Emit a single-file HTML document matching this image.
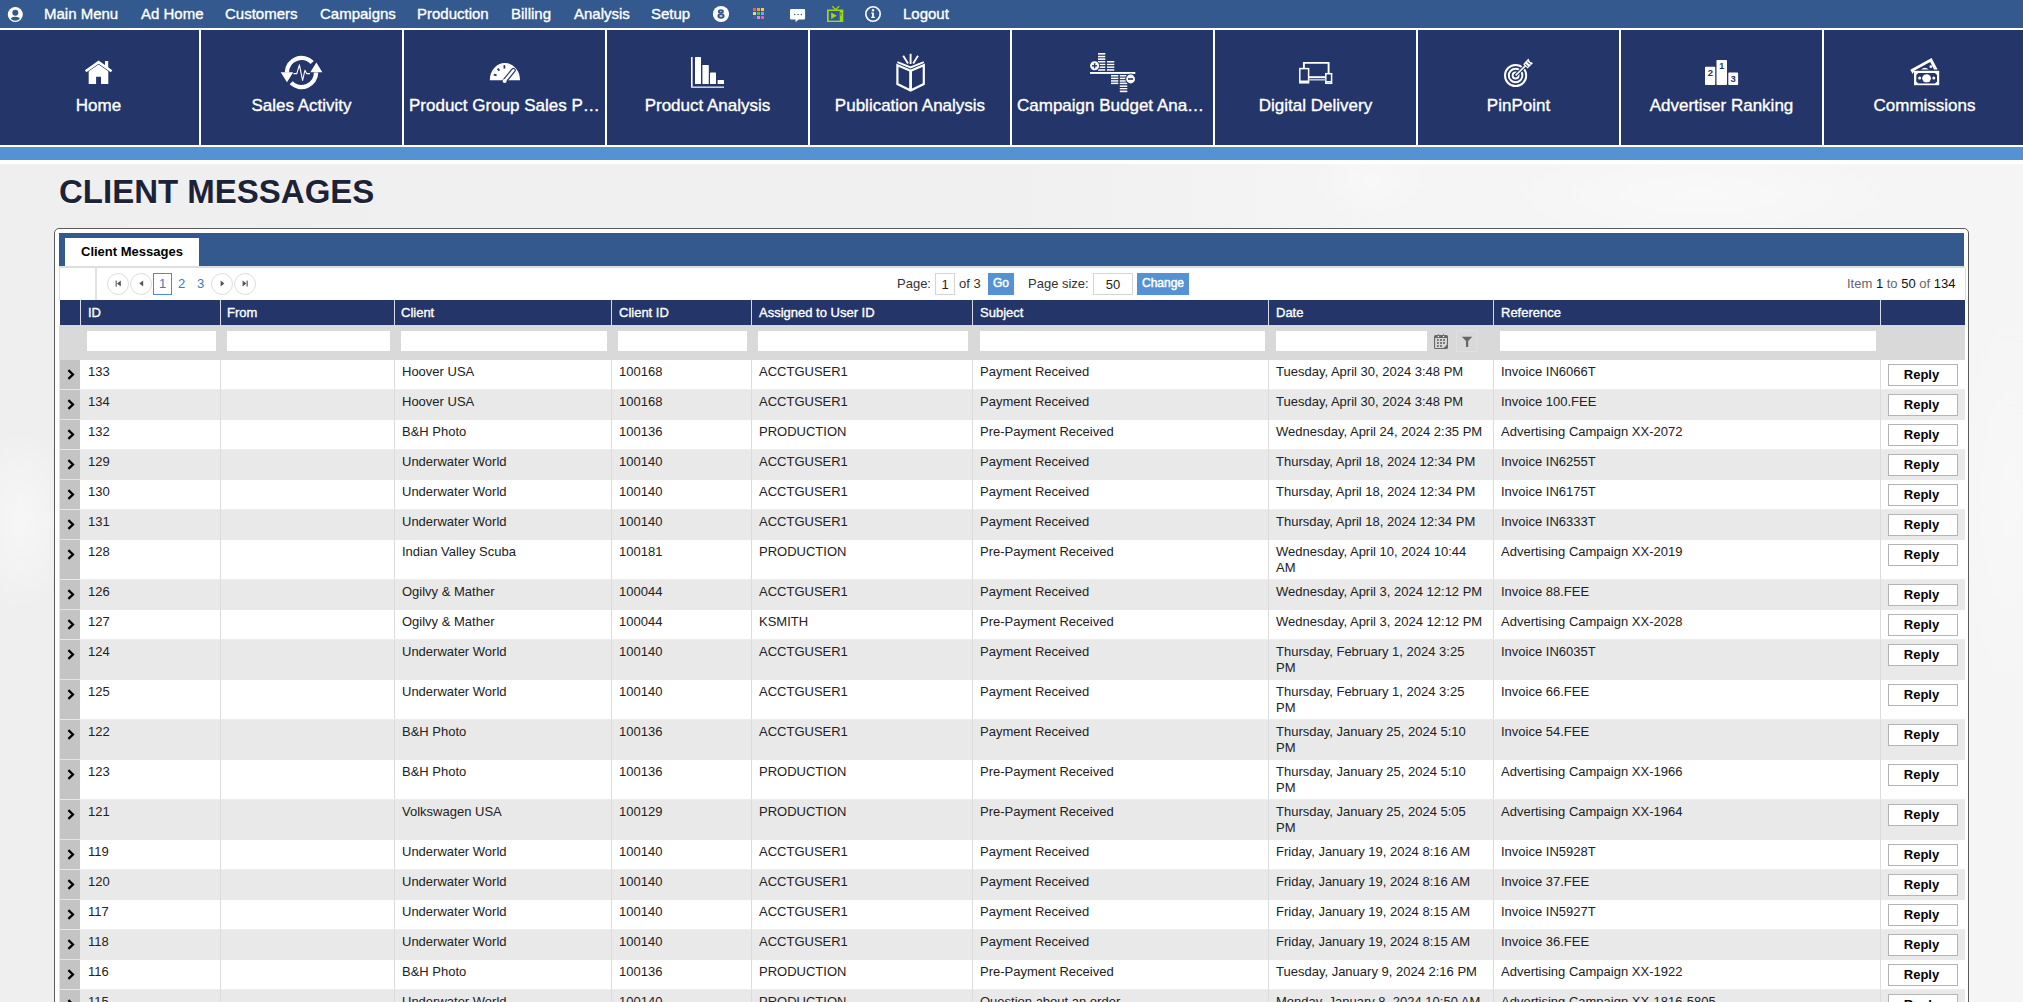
<!DOCTYPE html>
<html><head><meta charset="utf-8"><style>
html,body{margin:0;padding:0}
body{width:2023px;height:1002px;overflow:hidden;position:relative;background:radial-gradient(ellipse 200px 50px at 1700px 195px,#f9f9f9,rgba(249,249,249,0)),radial-gradient(ellipse 60px 40px at 1370px 180px,#f8f8f8,rgba(248,248,248,0)),radial-gradient(ellipse 60px 200px at 2010px 500px,#f8f8f8,rgba(248,248,248,0)),radial-gradient(ellipse 50px 90px at 20px 520px,#f7f7f7,rgba(247,247,247,0)),linear-gradient(90deg,#efefef 0px,#f0f0f0 1000px,#f5f5f5 1400px,#f5f5f5 2023px);font-family:"Liberation Sans",sans-serif;color:#222}
.abs{position:absolute}
#topbar{position:absolute;left:0;top:0;width:2023px;height:28px;background:#33598e}
#topline{position:absolute;left:0;top:28px;width:2023px;height:2px;background:#fff}
.nav{position:absolute;top:-0.5px;height:28px;line-height:28px;font-size:15px;color:#fff;white-space:nowrap}
#tilesbg{position:absolute;left:0;top:30px;width:2023px;height:117px;background:#fff}
.tile{position:absolute;top:30px;height:115px;width:200.875px;background:#243569;color:#fff;overflow:hidden}
.tile .lbl.l{text-align:left}
.tile .lbl{position:absolute;left:5px;right:5px;top:66px;height:20px;line-height:20px;font-size:17px;text-align:center;white-space:nowrap;overflow:hidden;text-overflow:ellipsis}
.tile svg{position:absolute}
#bluebar{position:absolute;left:0;top:147px;width:2023px;height:13px;background:#5592d3}
#whitebar{position:absolute;left:0;top:160px;width:2023px;height:4px;background:#fff}
#h1{position:absolute;left:59px;top:172px;font-size:33px;font-weight:bold;color:#1c2338;line-height:40px;white-space:nowrap;text-shadow:0 1px 1px #fff}
#panel{position:absolute;left:54px;top:228px;width:1913px;height:800px;border:1px solid #5a5a5a;border-radius:5px;background:#fff}
#tabbar{position:absolute;left:59px;top:233px;width:1905px;height:33px;background:#33598e}
#tab{position:absolute;left:65px;top:238px;width:134px;height:28px;background:#fff;font-size:13px;font-weight:bold;color:#000;line-height:28px}
#tabline{position:absolute;left:59px;top:266px;width:1906px;height:2px;background:#dedede}
#pager{position:absolute;left:59px;top:268px;width:1905px;height:32px;background:#fff;border-left:1px solid #ddd;border-right:1px solid #ddd}
.pbtn{position:absolute;top:273px;width:20px;height:20px;border:1px solid #ddd;border-radius:50%;background:#fff}
.pnum{position:absolute;top:273px;height:22px;line-height:22px;font-size:13px;color:#3a7cc4;text-align:center}
.ptxt{position:absolute;top:273px;height:22px;line-height:22px;font-size:13px;color:#333;white-space:nowrap}
.pinp{position:absolute;top:273px;height:20px;border:1px solid #d5d5d5;background:#fff;font-size:13px;line-height:21px;text-align:center;color:#222}
.pgo{position:absolute;top:273px;height:22px;background:#5592d3;color:#fff;font-size:12px;font-weight:normal;-webkit-text-stroke:0.45px #fff;line-height:20px;text-align:center}
#thead{position:absolute;left:60px;top:300px;width:1905px;height:25px;background:#243569}
.th{position:absolute;top:0;height:25px;line-height:25px;font-size:13px;color:#fff;white-space:nowrap}
.thl{position:absolute;top:0;width:1px;height:25px;background:#d8dce6}
#filter{position:absolute;left:59px;top:325px;width:1906px;height:35px;background:#d9d9d9}
.finp{position:absolute;top:6px;height:20px;background:#fff}
.row{position:absolute;left:60px;width:1905px;overflow:hidden}
#lborder{position:absolute;left:59px;top:360px;width:1px;height:642px;background:#e6e6e6}
.exp{position:absolute;left:0;top:0;width:20px;background:#c4c4c4}
.exp svg{position:absolute;left:6.6px;top:9px}
.exp{border-bottom:1px solid #e4e4e4;box-sizing:border-box}
.c{position:absolute;top:4px;font-size:13px;line-height:16px;color:#222;white-space:nowrap}
.vl{position:absolute;top:0;width:1px;background:#dcdcdc}
.reply{position:absolute;width:68px;height:20px;text-indent:-3px;border:1px solid #b4b4b4;background:#fff;font-size:13px;font-weight:bold;color:#000;text-align:center;line-height:20px}
.nav,.tile .lbl,.th{-webkit-text-stroke:0.35px #fff}

</style></head><body>
<div id="topbar"></div>
<div id="topline"></div>
<!-- user icon -->
<svg class="abs" style="left:0;top:0" width="30" height="28" viewBox="0 0 30 28">
<defs><clipPath id="uc"><circle cx="15.3" cy="14.5" r="6.2"/></clipPath></defs>
<circle cx="15.3" cy="14.5" r="7.5" fill="#fff"/>
<g clip-path="url(#uc)"><ellipse cx="15.3" cy="19.4" rx="4.6" ry="2.6" fill="#33598e"/></g>
<circle cx="15.3" cy="12.8" r="3" fill="#33598e"/>
</svg>
<div class="nav" style="left:44px">Main Menu</div>
<div class="nav" style="left:141px">Ad Home</div>
<div class="nav" style="left:225px">Customers</div>
<div class="nav" style="left:320px">Campaigns</div>
<div class="nav" style="left:417px">Production</div>
<div class="nav" style="left:511px">Billing</div>
<div class="nav" style="left:574px">Analysis</div>
<div class="nav" style="left:651px">Setup</div>
<div class="nav" style="left:903px">Logout</div>
<!-- 8 badge -->
<svg class="abs" style="left:710px;top:4px" width="22" height="22" viewBox="0 0 22 22">
<circle cx="11" cy="10" r="8.1" fill="#fff"/>
<ellipse cx="10.9" cy="7.6" rx="2.1" ry="1.35" fill="none" stroke="#33598e" stroke-width="1.8"/><ellipse cx="11" cy="12" rx="2.6" ry="1.75" fill="none" stroke="#33598e" stroke-width="2"/>
</svg>
<!-- grid -->
<svg class="abs" style="left:752px;top:7px" width="14" height="14" viewBox="0 0 14 14">
<rect x="1" y="1" width="3" height="3" fill="#e8604f"/><rect x="5" y="1" width="3" height="3" fill="#f0a23f"/><rect x="9" y="1" width="3" height="3" fill="#f0d040"/>
<rect x="1" y="5" width="3" height="3" fill="#cbe89a"/><rect x="5" y="5" width="3" height="3" fill="#5fbf45"/><rect x="9" y="5" width="3" height="3" fill="#6ea8ef"/>
<rect x="1" y="9" width="3" height="3" fill="#535b93"/><rect x="5" y="9" width="3" height="3" fill="#d488e0"/><rect x="9" y="9" width="3" height="3" fill="#ee6293"/>
</svg>
<!-- chat -->
<svg class="abs" style="left:788px;top:7px" width="20" height="17" viewBox="0 0 20 17">
<path d="M3.3 2 H15.8 Q17.1 2 17.1 3.3 V11.2 Q17.1 12.5 15.8 12.5 H10.5 L7.6 15.2 L7.6 12.5 H3.3 Q2 12.5 2 11.2 V3.3 Q2 2 3.3 2 Z" fill="#fff"/>
<circle cx="6.6" cy="7.5" r="0.75" fill="#33598e"/><circle cx="10" cy="7.5" r="0.75" fill="#33598e"/><circle cx="13.4" cy="7.5" r="0.75" fill="#33598e"/>
</svg>
<!-- tv -->
<svg class="abs" style="left:825px;top:4px" width="20" height="20" viewBox="0 0 20 20">
<path d="M7.3 2.2 L10.8 5.6 L14.2 2.2" fill="none" stroke="#a2d41c" stroke-width="1.3"/>
<rect x="2" y="5.5" width="16.3" height="12.5" fill="#a2d41c"/>
<rect x="3.7" y="7" width="11" height="9.6" fill="#33598e"/>
<path d="M6.2 8.6 L11.9 11.8 L6.2 15 Z" fill="#a2d41c"/>
<rect x="15.3" y="8.7" width="1.3" height="1.3" fill="#33598e"/><rect x="15.3" y="10.7" width="1.3" height="0.8" fill="#33598e"/>
</svg>
<!-- info -->
<svg class="abs" style="left:863px;top:4px" width="20" height="20" viewBox="0 0 20 20">
<circle cx="10" cy="10" r="7.2" fill="none" stroke="#fff" stroke-width="1.6"/>
<circle cx="10" cy="6.3" r="1.2" fill="#fff"/>
<path d="M8.3 8.5 H10.9 V12.8 H11.8 V14.1 H8.2 V12.8 H9.1 V9.8 H8.3 Z" fill="#fff"/>
</svg>

<div id="tilesbg"></div>
<div class="tile" style="left:-2px;width:201px"><div class="lbl">Home</div></div>
<div class="tile" style="left:201px;width:201px"><div class="lbl">Sales Activity</div></div>
<div class="tile" style="left:404px;width:201px"><div class="lbl l">Product Group Sales P…</div></div>
<div class="tile" style="left:607px;width:201px"><div class="lbl">Product Analysis</div></div>
<div class="tile" style="left:810px;width:200px"><div class="lbl">Publication Analysis</div></div>
<div class="tile" style="left:1012px;width:201px"><div class="lbl l">Campaign Budget Ana…</div></div>
<div class="tile" style="left:1215px;width:201px"><div class="lbl">Digital Delivery</div></div>
<div class="tile" style="left:1418px;width:201px"><div class="lbl">PinPoint</div></div>
<div class="tile" style="left:1621px;width:201px"><div class="lbl">Advertiser Ranking</div></div>
<div class="tile" style="left:1824px;width:201px"><div class="lbl">Commissions</div></div>

<!-- tile icons in page coords -->
<svg class="abs" style="left:0;top:30px" width="2023" height="115" viewBox="0 30 2023 115">
<!-- home -->
<g fill="#fff">
<path d="M85.6 71.2 L98.6 62.2 L111.6 71.2" fill="none" stroke="#fff" stroke-width="2.6" stroke-linejoin="miter"/>
<rect x="105" y="61" width="3.2" height="6.5"/>
<path d="M88.7 71.3 L98.6 64.6 L108.3 71.3 V84.1 H101 V76.7 H96.1 V84.1 H88.7 Z"/>
</g>
<!-- sales activity -->
<g fill="#fff" stroke="none">
<path d="M286.9 72.5 A14.6 14.6 0 0 1 312.2 62.6" fill="none" stroke="#fff" stroke-width="4.4"/>
<path d="M316.1 72.5 A14.6 14.6 0 0 1 291.2 82.8" fill="none" stroke="#fff" stroke-width="4.4"/>
<path d="M280.7 72.2 L293.2 72.2 L287 82.3 Z"/>
<path d="M310.3 72.2 L322.3 72.2 L316.4 62.6 Z"/>
<path d="M293.5 73.6 L296.8 73.6 L299.4 64.8 L302.6 80.5 L304.9 70.3 L306.6 73.6 L310 73.6" fill="none" stroke="#fff" stroke-width="1.1" stroke-linejoin="round"/>
</g>
<!-- gauge -->
<g>
<path d="M489.8 80.2 A15.1 17.3 0 0 1 520 80.2 Z" fill="#fff"/>
<path d="M504.6 81 L513.4 70.3" stroke="#243569" stroke-width="4.8" stroke-linecap="round"/>
<path d="M504.6 81 L513.4 70.3" stroke="#fff" stroke-width="2.4" stroke-linecap="round"/>
<circle cx="504.6" cy="80.9" r="2" fill="#fff"/>
<path d="M493.8 74.6 L496.6 75.4" stroke="#243569" stroke-width="1.8"/>
<path d="M497.6 68.6 L499.4 70.6" stroke="#243569" stroke-width="1.8"/>
<path d="M504.4 65.2 L504.4 68.6" stroke="#243569" stroke-width="1.8"/>
</g>
<!-- bar chart -->
<g fill="#fff">
<rect x="691" y="57" width="1.6" height="31"/>
<rect x="691" y="86.4" width="33" height="1.6" fill="#c8ccd8"/>
<rect x="695" y="57" width="6" height="27" rx="0.6"/>
<rect x="702.4" y="65" width="6.4" height="19" rx="0.6"/>
<rect x="710" y="72.6" width="6" height="11.4" rx="0.6"/>
<rect x="717.6" y="80" width="6.4" height="4" rx="0.6"/>
</g>
<!-- book -->
<g fill="none" stroke="#fff">
<path d="M910.6 53.8 V64" stroke-width="1.9"/>
<path d="M903.2 55.8 L908 63.4" stroke-width="1.9"/>
<path d="M918 55.8 L913.2 63.4" stroke-width="1.9"/>
<path d="M897.4 62.2 L910.6 67.4 L923.8 62.2" stroke-width="1.9"/>
<path d="M897.4 65.2 L910.6 70.8 L923.8 65.2 V84 L910.6 90.6 L897.4 84 Z" stroke-width="2.2" stroke-linejoin="miter"/>
<path d="M910.6 70 V91" stroke-width="2.8"/>
</g>
<!-- campaign budget -->
<g fill="#fff">
<rect x="1090" y="72" width="45.3" height="1.9"/>
<g>
<rect x="1098" y="53" width="7.3" height="1.6"/><rect x="1098" y="55.8" width="7.3" height="1.5"/><rect x="1098" y="58.3" width="7.3" height="1.6"/>
<rect x="1098" y="61" width="7.3" height="1.5"/><rect x="1098" y="63.8" width="7.3" height="1.3"/><rect x="1098" y="66.4" width="7.3" height="1.5"/><rect x="1098" y="69.2" width="7.3" height="1.5"/>
<rect x="1107" y="61" width="7.3" height="1.5"/><rect x="1107" y="63.8" width="7.3" height="1.3"/><rect x="1107" y="66.4" width="7.3" height="1.5"/><rect x="1107" y="69.2" width="7.3" height="1.5"/>
<rect x="1111" y="75" width="7.3" height="1.5"/><rect x="1111" y="77.6" width="7.3" height="1.5"/><rect x="1111" y="80.2" width="7.3" height="1.5"/><rect x="1111" y="82.6" width="7.3" height="1.5"/>
<rect x="1119.8" y="75" width="7.5" height="1.5"/><rect x="1119.8" y="77.6" width="7.5" height="1.5"/><rect x="1119.8" y="80.2" width="7.5" height="1.5"/><rect x="1119.8" y="82.6" width="7.5" height="1.5"/>
<rect x="1119.8" y="85.4" width="7.5" height="1.5"/><rect x="1119.8" y="88" width="7.5" height="1.3"/><rect x="1119.8" y="90.6" width="7.5" height="1.6"/>
</g>
<circle cx="1094.6" cy="65.8" r="5.4" fill="#243569"/>
<circle cx="1094.6" cy="65.8" r="4.5"/>
<rect x="1092" y="65.1" width="5.2" height="1.4" fill="#243569"/><rect x="1093.9" y="63.2" width="1.4" height="5.2" fill="#243569"/>
<circle cx="1130.6" cy="79" r="5.4" fill="#243569"/>
<circle cx="1130.6" cy="79" r="4.4"/>
<rect x="1128" y="78.2" width="5.2" height="1.6" fill="#243569"/>
</g>
<!-- digital delivery -->
<g fill="none" stroke="#fff">
<path d="M1303.9 68 V62.9 H1328.6 V73" stroke-width="1.9"/>
<rect x="1299.8" y="68.6" width="8.8" height="14.2" stroke-width="1.5"/>
<rect x="1325.8" y="73.7" width="5.8" height="9.6" stroke-width="1.5"/>
<path d="M1308.6 77.2 H1325.8" stroke-width="2"/>
<path d="M1308.6 79.8 H1325.8" stroke-width="1.6" stroke="#b7bdd0"/>
<path d="M1299.8 81.4 H1308.6 M1325.8 81.8 H1331.6" stroke-width="1.6"/>
</g>
<!-- pinpoint -->
<g fill="none" stroke="#fff">
<circle cx="1515.6" cy="75.5" r="10.6" stroke-width="2"/>
<circle cx="1515.6" cy="75.5" r="6.8" stroke-width="2"/>
<circle cx="1515.6" cy="75.5" r="3" stroke-width="1.9"/>
<path d="M1515.6 75.5 L1526 65" stroke="#243569" stroke-width="3.6"/>
<path d="M1515.6 75.5 L1526.5 64.6" stroke-width="1.6"/>
<path d="M1523.2 64.2 L1528.4 58.4 L1529.9 61.7 L1533.1 62.9 L1527.6 68.6 Z" fill="#fff" stroke="none"/>
<path d="M1525.4 63.8 L1526.4 65.6 L1528.2 66.4 M1527.6 61.6 L1528.6 63.4 L1530.4 64.2" fill="none" stroke="#243569" stroke-width="1"/>
</g>
<!-- podium -->
<g fill="#fff">
<rect x="1705" y="66.8" width="10.2" height="18.2" rx="0.8"/>
<rect x="1716.5" y="60" width="10.5" height="25" rx="0.8"/>
<rect x="1728.3" y="72.6" width="9.8" height="12.4" rx="0.8"/>
</g>
<g font-family="Liberation Sans" font-weight="bold" fill="#243569" text-anchor="middle">
<text x="1710.5" y="75.8" font-size="9.5">2</text>
<text x="1721.7" y="69.4" font-size="9">1</text>
<text x="1733.2" y="81.8" font-size="9.5">3</text>
</g>
<!-- commissions -->
<g>
<path d="M1910.3 69.8 L1931.6 58.1 L1937.6 69.4 L1934 69.4 L1930.2 62 L1914.6 70.6 L1912.6 74 Z" fill="#fff"/>
<path d="M1921 69.6 Q1925 66 1928.8 69.6 Z" fill="#fff"/>
<circle cx="1930.8" cy="66.7" r="1.4" fill="#fff"/>
<rect x="1914" y="70.8" width="25.2" height="14.4" fill="#fff"/>
<path d="M1918.3 73 H1935 L1937 75 V81.6 L1935 83.6 H1918.3 L1916.3 81.6 V75 Z" fill="#243569"/>
<ellipse cx="1926.6" cy="78.3" rx="4.4" ry="4" fill="#fff"/>
<circle cx="1919.6" cy="78.1" r="1.5" fill="#fff"/>
<circle cx="1933.8" cy="78.1" r="1.5" fill="#fff"/>
</g>
</svg>

<div id="bluebar"></div>
<div id="whitebar"></div>
<div id="h1">CLIENT MESSAGES</div>

<div id="panel"></div>
<div id="tabbar"></div>
<div id="tab"><span style="position:absolute;left:16px">Client Messages</span></div>
<div id="tabline"></div>
<div id="pager"><div style="position:absolute;left:35px;top:0;width:2px;height:32px;background:#e2e2e2"></div></div>
<!-- pager buttons -->
<div class="pbtn" style="left:107px"></div>
<div class="pbtn" style="left:130px"></div>
<div class="pbtn" style="left:211px"></div>
<div class="pbtn" style="left:234px"></div>
<svg class="abs" style="left:107px;top:273px" width="150" height="22" viewBox="107 273 150 22">
<g fill="#555">
<rect x="115.6" y="280.6" width="1.1" height="6"/><path d="M120.8 280.6 V286.6 L117 283.6 Z"/>
<path d="M143.2 280.6 V286.6 L139.4 283.6 Z"/>
<path d="M220.6 280.6 V286.6 L224.4 283.6 Z"/>
<path d="M242.6 280.6 V286.6 L246.4 283.6 Z"/><rect x="246.6" y="280.6" width="1.1" height="6"/>
</g>
</svg>
<div class="pnum" style="left:153px;width:17px;border:1px solid #4a8ad6;height:20px;line-height:20px">1</div>
<div class="pnum" style="left:174px;width:15px">2</div>
<div class="pnum" style="left:193px;width:15px">3</div>

<div class="ptxt" style="left:897px">Page:</div>
<div class="pinp" style="left:935px;width:18px">1</div>
<div class="ptxt" style="left:959px">of 3</div>
<div class="pgo" style="left:988px;width:26px">Go</div>
<div class="ptxt" style="left:1028px">Page size:</div>
<div class="pinp" style="left:1093px;width:38px">50</div>
<div class="pgo" style="left:1137px;width:52px">Change</div>
<div class="ptxt" style="left:1847px;color:#666">Item <span style="color:#111">1</span> to <span style="color:#111">50</span> of <span style="color:#111">134</span></div>

<div id="thead">
<div class="thl" style="left:20px"></div>
<div class="th" style="left:28px">ID</div>
<div class="thl" style="left:160px"></div>
<div class="th" style="left:167px">From</div>
<div class="thl" style="left:334px"></div>
<div class="th" style="left:341px">Client</div>
<div class="thl" style="left:551px"></div>
<div class="th" style="left:559px">Client ID</div>
<div class="thl" style="left:691px"></div>
<div class="th" style="left:699px">Assigned to User ID</div>
<div class="thl" style="left:912px"></div>
<div class="th" style="left:920px">Subject</div>
<div class="thl" style="left:1208px"></div>
<div class="th" style="left:1216px">Date</div>
<div class="thl" style="left:1433px"></div>
<div class="th" style="left:1441px">Reference</div>
<div class="thl" style="left:1820px"></div>
</div>
<div id="filter">
<div class="finp" style="left:28px;width:129px"></div>
<div class="finp" style="left:168px;width:163px"></div>
<div class="finp" style="left:342px;width:206px"></div>
<div class="finp" style="left:559px;width:129px"></div>
<div class="finp" style="left:699px;width:210px"></div>
<div class="finp" style="left:921px;width:285px"></div>
<div class="finp" style="left:1217px;width:151px"></div>
<div class="finp" style="left:1441px;width:376px"></div>
<svg class="abs" style="left:1370px;top:5px" width="50" height="24" viewBox="1429 330 50 24">
<g fill="#666">
<path d="M1435.6 334.9 H1446.4 Q1448 334.9 1448 336.5 V347.4 Q1448 349 1446.4 349 H1435.6 Q1434 349 1434 347.4 V336.5 Q1434 334.9 1435.6 334.9 Z M1435.1 338 V347.9 H1443.2 L1446.9 344.2 V338 Z" fill-rule="evenodd"/>
<rect x="1438.1" y="333.8" width="0.7" height="1.4"/><rect x="1443.2" y="333.8" width="0.7" height="1.4"/>
<rect x="1437" y="339.1" width="1.8" height="1.8"/><rect x="1440.1" y="339.1" width="1.8" height="1.8"/><rect x="1443.1" y="339.1" width="1.8" height="1.8"/>
<rect x="1437" y="342.1" width="1.8" height="1.8"/><rect x="1440.1" y="342.1" width="1.8" height="1.8"/><rect x="1443.1" y="342.1" width="1.8" height="1.8"/>
<rect x="1437" y="345.1" width="1.8" height="1.8"/><rect x="1440.1" y="345.1" width="1.8" height="1.8"/>
</g>
<circle cx="1438.4" cy="336.4" r="0.7" fill="#fff"/><circle cx="1443.5" cy="336.4" r="0.7" fill="#fff"/>
<path d="M1443.6 347.6 L1446.6 344.6" stroke="#f4f4f4" stroke-width="0.7"/>
<rect x="1456.5" y="330.8" width="20.6" height="20.6" fill="none" stroke="#e0e0e0" stroke-width="1"/>
<path d="M1461.8 336.8 H1472.3 L1468.2 341 V347 H1466 V341 Z" fill="#666"/>
</svg>
</div>

<div id="lborder"></div>
<div id="rows">
<div class="row" style="top:360px;height:30px;background:#ffffff"><div class="exp" style="height:30px"><svg width="8" height="11" viewBox="0 0 8 11"><path d="M1.4 1.2 L5.9 5.5 L1.4 9.8" fill="none" stroke="#000" stroke-width="2.3"/></svg></div><div class="c" style="left:28px">133</div><div class="c" style="left:168px"></div><div class="c" style="left:342px">Hoover USA</div><div class="c" style="left:559px">100168</div><div class="c" style="left:699px">ACCTGUSER1</div><div class="c" style="left:920px">Payment Received</div><div class="c" style="left:1216px">Tuesday, April 30, 2024 3:48 PM</div><div class="c" style="left:1441px">Invoice IN6066T</div><div class="vl" style="left:160px;height:30px"></div><div class="vl" style="left:334px;height:30px"></div><div class="vl" style="left:551px;height:30px"></div><div class="vl" style="left:691px;height:30px"></div><div class="vl" style="left:912px;height:30px"></div><div class="vl" style="left:1208px;height:30px"></div><div class="vl" style="left:1433px;height:30px"></div><div class="vl" style="left:1820px;height:30px"></div><div class="reply" style="left:1828px;top:4px">Reply</div></div><div class="row" style="top:390px;height:30px;background:#e9e9e9;box-shadow:0 -1px 0 rgba(233,233,233,0.8)"><div class="exp" style="height:30px"><svg width="8" height="11" viewBox="0 0 8 11"><path d="M1.4 1.2 L5.9 5.5 L1.4 9.8" fill="none" stroke="#000" stroke-width="2.3"/></svg></div><div class="c" style="left:28px">134</div><div class="c" style="left:168px"></div><div class="c" style="left:342px">Hoover USA</div><div class="c" style="left:559px">100168</div><div class="c" style="left:699px">ACCTGUSER1</div><div class="c" style="left:920px">Payment Received</div><div class="c" style="left:1216px">Tuesday, April 30, 2024 3:48 PM</div><div class="c" style="left:1441px">Invoice 100.FEE</div><div class="vl" style="left:160px;height:30px"></div><div class="vl" style="left:334px;height:30px"></div><div class="vl" style="left:551px;height:30px"></div><div class="vl" style="left:691px;height:30px"></div><div class="vl" style="left:912px;height:30px"></div><div class="vl" style="left:1208px;height:30px"></div><div class="vl" style="left:1433px;height:30px"></div><div class="vl" style="left:1820px;height:30px"></div><div class="reply" style="left:1828px;top:4px">Reply</div></div><div class="row" style="top:420px;height:30px;background:#ffffff"><div class="exp" style="height:30px"><svg width="8" height="11" viewBox="0 0 8 11"><path d="M1.4 1.2 L5.9 5.5 L1.4 9.8" fill="none" stroke="#000" stroke-width="2.3"/></svg></div><div class="c" style="left:28px">132</div><div class="c" style="left:168px"></div><div class="c" style="left:342px">B&amp;H Photo</div><div class="c" style="left:559px">100136</div><div class="c" style="left:699px">PRODUCTION</div><div class="c" style="left:920px">Pre-Payment Received</div><div class="c" style="left:1216px">Wednesday, April 24, 2024 2:35 PM</div><div class="c" style="left:1441px">Advertising Campaign XX-2072</div><div class="vl" style="left:160px;height:30px"></div><div class="vl" style="left:334px;height:30px"></div><div class="vl" style="left:551px;height:30px"></div><div class="vl" style="left:691px;height:30px"></div><div class="vl" style="left:912px;height:30px"></div><div class="vl" style="left:1208px;height:30px"></div><div class="vl" style="left:1433px;height:30px"></div><div class="vl" style="left:1820px;height:30px"></div><div class="reply" style="left:1828px;top:4px">Reply</div></div><div class="row" style="top:450px;height:30px;background:#e9e9e9;box-shadow:0 -1px 0 rgba(233,233,233,0.8)"><div class="exp" style="height:30px"><svg width="8" height="11" viewBox="0 0 8 11"><path d="M1.4 1.2 L5.9 5.5 L1.4 9.8" fill="none" stroke="#000" stroke-width="2.3"/></svg></div><div class="c" style="left:28px">129</div><div class="c" style="left:168px"></div><div class="c" style="left:342px">Underwater World</div><div class="c" style="left:559px">100140</div><div class="c" style="left:699px">ACCTGUSER1</div><div class="c" style="left:920px">Payment Received</div><div class="c" style="left:1216px">Thursday, April 18, 2024 12:34 PM</div><div class="c" style="left:1441px">Invoice IN6255T</div><div class="vl" style="left:160px;height:30px"></div><div class="vl" style="left:334px;height:30px"></div><div class="vl" style="left:551px;height:30px"></div><div class="vl" style="left:691px;height:30px"></div><div class="vl" style="left:912px;height:30px"></div><div class="vl" style="left:1208px;height:30px"></div><div class="vl" style="left:1433px;height:30px"></div><div class="vl" style="left:1820px;height:30px"></div><div class="reply" style="left:1828px;top:4px">Reply</div></div><div class="row" style="top:480px;height:30px;background:#ffffff"><div class="exp" style="height:30px"><svg width="8" height="11" viewBox="0 0 8 11"><path d="M1.4 1.2 L5.9 5.5 L1.4 9.8" fill="none" stroke="#000" stroke-width="2.3"/></svg></div><div class="c" style="left:28px">130</div><div class="c" style="left:168px"></div><div class="c" style="left:342px">Underwater World</div><div class="c" style="left:559px">100140</div><div class="c" style="left:699px">ACCTGUSER1</div><div class="c" style="left:920px">Payment Received</div><div class="c" style="left:1216px">Thursday, April 18, 2024 12:34 PM</div><div class="c" style="left:1441px">Invoice IN6175T</div><div class="vl" style="left:160px;height:30px"></div><div class="vl" style="left:334px;height:30px"></div><div class="vl" style="left:551px;height:30px"></div><div class="vl" style="left:691px;height:30px"></div><div class="vl" style="left:912px;height:30px"></div><div class="vl" style="left:1208px;height:30px"></div><div class="vl" style="left:1433px;height:30px"></div><div class="vl" style="left:1820px;height:30px"></div><div class="reply" style="left:1828px;top:4px">Reply</div></div><div class="row" style="top:510px;height:30px;background:#e9e9e9;box-shadow:0 -1px 0 rgba(233,233,233,0.8)"><div class="exp" style="height:30px"><svg width="8" height="11" viewBox="0 0 8 11"><path d="M1.4 1.2 L5.9 5.5 L1.4 9.8" fill="none" stroke="#000" stroke-width="2.3"/></svg></div><div class="c" style="left:28px">131</div><div class="c" style="left:168px"></div><div class="c" style="left:342px">Underwater World</div><div class="c" style="left:559px">100140</div><div class="c" style="left:699px">ACCTGUSER1</div><div class="c" style="left:920px">Payment Received</div><div class="c" style="left:1216px">Thursday, April 18, 2024 12:34 PM</div><div class="c" style="left:1441px">Invoice IN6333T</div><div class="vl" style="left:160px;height:30px"></div><div class="vl" style="left:334px;height:30px"></div><div class="vl" style="left:551px;height:30px"></div><div class="vl" style="left:691px;height:30px"></div><div class="vl" style="left:912px;height:30px"></div><div class="vl" style="left:1208px;height:30px"></div><div class="vl" style="left:1433px;height:30px"></div><div class="vl" style="left:1820px;height:30px"></div><div class="reply" style="left:1828px;top:4px">Reply</div></div><div class="row" style="top:540px;height:40px;background:#ffffff"><div class="exp" style="height:40px"><svg width="8" height="11" viewBox="0 0 8 11"><path d="M1.4 1.2 L5.9 5.5 L1.4 9.8" fill="none" stroke="#000" stroke-width="2.3"/></svg></div><div class="c" style="left:28px">128</div><div class="c" style="left:168px"></div><div class="c" style="left:342px">Indian Valley Scuba</div><div class="c" style="left:559px">100181</div><div class="c" style="left:699px">PRODUCTION</div><div class="c" style="left:920px">Pre-Payment Received</div><div class="c" style="left:1216px">Wednesday, April 10, 2024 10:44<br>AM</div><div class="c" style="left:1441px">Advertising Campaign XX-2019</div><div class="vl" style="left:160px;height:40px"></div><div class="vl" style="left:334px;height:40px"></div><div class="vl" style="left:551px;height:40px"></div><div class="vl" style="left:691px;height:40px"></div><div class="vl" style="left:912px;height:40px"></div><div class="vl" style="left:1208px;height:40px"></div><div class="vl" style="left:1433px;height:40px"></div><div class="vl" style="left:1820px;height:40px"></div><div class="reply" style="left:1828px;top:4px">Reply</div></div><div class="row" style="top:580px;height:30px;background:#e9e9e9;box-shadow:0 -1px 0 rgba(233,233,233,0.8)"><div class="exp" style="height:30px"><svg width="8" height="11" viewBox="0 0 8 11"><path d="M1.4 1.2 L5.9 5.5 L1.4 9.8" fill="none" stroke="#000" stroke-width="2.3"/></svg></div><div class="c" style="left:28px">126</div><div class="c" style="left:168px"></div><div class="c" style="left:342px">Ogilvy &amp; Mather</div><div class="c" style="left:559px">100044</div><div class="c" style="left:699px">ACCTGUSER1</div><div class="c" style="left:920px">Payment Received</div><div class="c" style="left:1216px">Wednesday, April 3, 2024 12:12 PM</div><div class="c" style="left:1441px">Invoice 88.FEE</div><div class="vl" style="left:160px;height:30px"></div><div class="vl" style="left:334px;height:30px"></div><div class="vl" style="left:551px;height:30px"></div><div class="vl" style="left:691px;height:30px"></div><div class="vl" style="left:912px;height:30px"></div><div class="vl" style="left:1208px;height:30px"></div><div class="vl" style="left:1433px;height:30px"></div><div class="vl" style="left:1820px;height:30px"></div><div class="reply" style="left:1828px;top:4px">Reply</div></div><div class="row" style="top:610px;height:30px;background:#ffffff"><div class="exp" style="height:30px"><svg width="8" height="11" viewBox="0 0 8 11"><path d="M1.4 1.2 L5.9 5.5 L1.4 9.8" fill="none" stroke="#000" stroke-width="2.3"/></svg></div><div class="c" style="left:28px">127</div><div class="c" style="left:168px"></div><div class="c" style="left:342px">Ogilvy &amp; Mather</div><div class="c" style="left:559px">100044</div><div class="c" style="left:699px">KSMITH</div><div class="c" style="left:920px">Pre-Payment Received</div><div class="c" style="left:1216px">Wednesday, April 3, 2024 12:12 PM</div><div class="c" style="left:1441px">Advertising Campaign XX-2028</div><div class="vl" style="left:160px;height:30px"></div><div class="vl" style="left:334px;height:30px"></div><div class="vl" style="left:551px;height:30px"></div><div class="vl" style="left:691px;height:30px"></div><div class="vl" style="left:912px;height:30px"></div><div class="vl" style="left:1208px;height:30px"></div><div class="vl" style="left:1433px;height:30px"></div><div class="vl" style="left:1820px;height:30px"></div><div class="reply" style="left:1828px;top:4px">Reply</div></div><div class="row" style="top:640px;height:40px;background:#e9e9e9;box-shadow:0 -1px 0 rgba(233,233,233,0.8)"><div class="exp" style="height:40px"><svg width="8" height="11" viewBox="0 0 8 11"><path d="M1.4 1.2 L5.9 5.5 L1.4 9.8" fill="none" stroke="#000" stroke-width="2.3"/></svg></div><div class="c" style="left:28px">124</div><div class="c" style="left:168px"></div><div class="c" style="left:342px">Underwater World</div><div class="c" style="left:559px">100140</div><div class="c" style="left:699px">ACCTGUSER1</div><div class="c" style="left:920px">Payment Received</div><div class="c" style="left:1216px">Thursday, February 1, 2024 3:25<br>PM</div><div class="c" style="left:1441px">Invoice IN6035T</div><div class="vl" style="left:160px;height:40px"></div><div class="vl" style="left:334px;height:40px"></div><div class="vl" style="left:551px;height:40px"></div><div class="vl" style="left:691px;height:40px"></div><div class="vl" style="left:912px;height:40px"></div><div class="vl" style="left:1208px;height:40px"></div><div class="vl" style="left:1433px;height:40px"></div><div class="vl" style="left:1820px;height:40px"></div><div class="reply" style="left:1828px;top:4px">Reply</div></div><div class="row" style="top:680px;height:40px;background:#ffffff"><div class="exp" style="height:40px"><svg width="8" height="11" viewBox="0 0 8 11"><path d="M1.4 1.2 L5.9 5.5 L1.4 9.8" fill="none" stroke="#000" stroke-width="2.3"/></svg></div><div class="c" style="left:28px">125</div><div class="c" style="left:168px"></div><div class="c" style="left:342px">Underwater World</div><div class="c" style="left:559px">100140</div><div class="c" style="left:699px">ACCTGUSER1</div><div class="c" style="left:920px">Payment Received</div><div class="c" style="left:1216px">Thursday, February 1, 2024 3:25<br>PM</div><div class="c" style="left:1441px">Invoice 66.FEE</div><div class="vl" style="left:160px;height:40px"></div><div class="vl" style="left:334px;height:40px"></div><div class="vl" style="left:551px;height:40px"></div><div class="vl" style="left:691px;height:40px"></div><div class="vl" style="left:912px;height:40px"></div><div class="vl" style="left:1208px;height:40px"></div><div class="vl" style="left:1433px;height:40px"></div><div class="vl" style="left:1820px;height:40px"></div><div class="reply" style="left:1828px;top:4px">Reply</div></div><div class="row" style="top:720px;height:40px;background:#e9e9e9;box-shadow:0 -1px 0 rgba(233,233,233,0.8)"><div class="exp" style="height:40px"><svg width="8" height="11" viewBox="0 0 8 11"><path d="M1.4 1.2 L5.9 5.5 L1.4 9.8" fill="none" stroke="#000" stroke-width="2.3"/></svg></div><div class="c" style="left:28px">122</div><div class="c" style="left:168px"></div><div class="c" style="left:342px">B&amp;H Photo</div><div class="c" style="left:559px">100136</div><div class="c" style="left:699px">ACCTGUSER1</div><div class="c" style="left:920px">Payment Received</div><div class="c" style="left:1216px">Thursday, January 25, 2024 5:10<br>PM</div><div class="c" style="left:1441px">Invoice 54.FEE</div><div class="vl" style="left:160px;height:40px"></div><div class="vl" style="left:334px;height:40px"></div><div class="vl" style="left:551px;height:40px"></div><div class="vl" style="left:691px;height:40px"></div><div class="vl" style="left:912px;height:40px"></div><div class="vl" style="left:1208px;height:40px"></div><div class="vl" style="left:1433px;height:40px"></div><div class="vl" style="left:1820px;height:40px"></div><div class="reply" style="left:1828px;top:4px">Reply</div></div><div class="row" style="top:760px;height:40px;background:#ffffff"><div class="exp" style="height:40px"><svg width="8" height="11" viewBox="0 0 8 11"><path d="M1.4 1.2 L5.9 5.5 L1.4 9.8" fill="none" stroke="#000" stroke-width="2.3"/></svg></div><div class="c" style="left:28px">123</div><div class="c" style="left:168px"></div><div class="c" style="left:342px">B&amp;H Photo</div><div class="c" style="left:559px">100136</div><div class="c" style="left:699px">PRODUCTION</div><div class="c" style="left:920px">Pre-Payment Received</div><div class="c" style="left:1216px">Thursday, January 25, 2024 5:10<br>PM</div><div class="c" style="left:1441px">Advertising Campaign XX-1966</div><div class="vl" style="left:160px;height:40px"></div><div class="vl" style="left:334px;height:40px"></div><div class="vl" style="left:551px;height:40px"></div><div class="vl" style="left:691px;height:40px"></div><div class="vl" style="left:912px;height:40px"></div><div class="vl" style="left:1208px;height:40px"></div><div class="vl" style="left:1433px;height:40px"></div><div class="vl" style="left:1820px;height:40px"></div><div class="reply" style="left:1828px;top:4px">Reply</div></div><div class="row" style="top:800px;height:40px;background:#e9e9e9;box-shadow:0 -1px 0 rgba(233,233,233,0.8)"><div class="exp" style="height:40px"><svg width="8" height="11" viewBox="0 0 8 11"><path d="M1.4 1.2 L5.9 5.5 L1.4 9.8" fill="none" stroke="#000" stroke-width="2.3"/></svg></div><div class="c" style="left:28px">121</div><div class="c" style="left:168px"></div><div class="c" style="left:342px">Volkswagen USA</div><div class="c" style="left:559px">100129</div><div class="c" style="left:699px">PRODUCTION</div><div class="c" style="left:920px">Pre-Payment Received</div><div class="c" style="left:1216px">Thursday, January 25, 2024 5:05<br>PM</div><div class="c" style="left:1441px">Advertising Campaign XX-1964</div><div class="vl" style="left:160px;height:40px"></div><div class="vl" style="left:334px;height:40px"></div><div class="vl" style="left:551px;height:40px"></div><div class="vl" style="left:691px;height:40px"></div><div class="vl" style="left:912px;height:40px"></div><div class="vl" style="left:1208px;height:40px"></div><div class="vl" style="left:1433px;height:40px"></div><div class="vl" style="left:1820px;height:40px"></div><div class="reply" style="left:1828px;top:4px">Reply</div></div><div class="row" style="top:840px;height:30px;background:#ffffff"><div class="exp" style="height:30px"><svg width="8" height="11" viewBox="0 0 8 11"><path d="M1.4 1.2 L5.9 5.5 L1.4 9.8" fill="none" stroke="#000" stroke-width="2.3"/></svg></div><div class="c" style="left:28px">119</div><div class="c" style="left:168px"></div><div class="c" style="left:342px">Underwater World</div><div class="c" style="left:559px">100140</div><div class="c" style="left:699px">ACCTGUSER1</div><div class="c" style="left:920px">Payment Received</div><div class="c" style="left:1216px">Friday, January 19, 2024 8:16 AM</div><div class="c" style="left:1441px">Invoice IN5928T</div><div class="vl" style="left:160px;height:30px"></div><div class="vl" style="left:334px;height:30px"></div><div class="vl" style="left:551px;height:30px"></div><div class="vl" style="left:691px;height:30px"></div><div class="vl" style="left:912px;height:30px"></div><div class="vl" style="left:1208px;height:30px"></div><div class="vl" style="left:1433px;height:30px"></div><div class="vl" style="left:1820px;height:30px"></div><div class="reply" style="left:1828px;top:4px">Reply</div></div><div class="row" style="top:870px;height:30px;background:#e9e9e9;box-shadow:0 -1px 0 rgba(233,233,233,0.8)"><div class="exp" style="height:30px"><svg width="8" height="11" viewBox="0 0 8 11"><path d="M1.4 1.2 L5.9 5.5 L1.4 9.8" fill="none" stroke="#000" stroke-width="2.3"/></svg></div><div class="c" style="left:28px">120</div><div class="c" style="left:168px"></div><div class="c" style="left:342px">Underwater World</div><div class="c" style="left:559px">100140</div><div class="c" style="left:699px">ACCTGUSER1</div><div class="c" style="left:920px">Payment Received</div><div class="c" style="left:1216px">Friday, January 19, 2024 8:16 AM</div><div class="c" style="left:1441px">Invoice 37.FEE</div><div class="vl" style="left:160px;height:30px"></div><div class="vl" style="left:334px;height:30px"></div><div class="vl" style="left:551px;height:30px"></div><div class="vl" style="left:691px;height:30px"></div><div class="vl" style="left:912px;height:30px"></div><div class="vl" style="left:1208px;height:30px"></div><div class="vl" style="left:1433px;height:30px"></div><div class="vl" style="left:1820px;height:30px"></div><div class="reply" style="left:1828px;top:4px">Reply</div></div><div class="row" style="top:900px;height:30px;background:#ffffff"><div class="exp" style="height:30px"><svg width="8" height="11" viewBox="0 0 8 11"><path d="M1.4 1.2 L5.9 5.5 L1.4 9.8" fill="none" stroke="#000" stroke-width="2.3"/></svg></div><div class="c" style="left:28px">117</div><div class="c" style="left:168px"></div><div class="c" style="left:342px">Underwater World</div><div class="c" style="left:559px">100140</div><div class="c" style="left:699px">ACCTGUSER1</div><div class="c" style="left:920px">Payment Received</div><div class="c" style="left:1216px">Friday, January 19, 2024 8:15 AM</div><div class="c" style="left:1441px">Invoice IN5927T</div><div class="vl" style="left:160px;height:30px"></div><div class="vl" style="left:334px;height:30px"></div><div class="vl" style="left:551px;height:30px"></div><div class="vl" style="left:691px;height:30px"></div><div class="vl" style="left:912px;height:30px"></div><div class="vl" style="left:1208px;height:30px"></div><div class="vl" style="left:1433px;height:30px"></div><div class="vl" style="left:1820px;height:30px"></div><div class="reply" style="left:1828px;top:4px">Reply</div></div><div class="row" style="top:930px;height:30px;background:#e9e9e9;box-shadow:0 -1px 0 rgba(233,233,233,0.8)"><div class="exp" style="height:30px"><svg width="8" height="11" viewBox="0 0 8 11"><path d="M1.4 1.2 L5.9 5.5 L1.4 9.8" fill="none" stroke="#000" stroke-width="2.3"/></svg></div><div class="c" style="left:28px">118</div><div class="c" style="left:168px"></div><div class="c" style="left:342px">Underwater World</div><div class="c" style="left:559px">100140</div><div class="c" style="left:699px">ACCTGUSER1</div><div class="c" style="left:920px">Payment Received</div><div class="c" style="left:1216px">Friday, January 19, 2024 8:15 AM</div><div class="c" style="left:1441px">Invoice 36.FEE</div><div class="vl" style="left:160px;height:30px"></div><div class="vl" style="left:334px;height:30px"></div><div class="vl" style="left:551px;height:30px"></div><div class="vl" style="left:691px;height:30px"></div><div class="vl" style="left:912px;height:30px"></div><div class="vl" style="left:1208px;height:30px"></div><div class="vl" style="left:1433px;height:30px"></div><div class="vl" style="left:1820px;height:30px"></div><div class="reply" style="left:1828px;top:4px">Reply</div></div><div class="row" style="top:960px;height:30px;background:#ffffff"><div class="exp" style="height:30px"><svg width="8" height="11" viewBox="0 0 8 11"><path d="M1.4 1.2 L5.9 5.5 L1.4 9.8" fill="none" stroke="#000" stroke-width="2.3"/></svg></div><div class="c" style="left:28px">116</div><div class="c" style="left:168px"></div><div class="c" style="left:342px">B&amp;H Photo</div><div class="c" style="left:559px">100136</div><div class="c" style="left:699px">PRODUCTION</div><div class="c" style="left:920px">Pre-Payment Received</div><div class="c" style="left:1216px">Tuesday, January 9, 2024 2:16 PM</div><div class="c" style="left:1441px">Advertising Campaign XX-1922</div><div class="vl" style="left:160px;height:30px"></div><div class="vl" style="left:334px;height:30px"></div><div class="vl" style="left:551px;height:30px"></div><div class="vl" style="left:691px;height:30px"></div><div class="vl" style="left:912px;height:30px"></div><div class="vl" style="left:1208px;height:30px"></div><div class="vl" style="left:1433px;height:30px"></div><div class="vl" style="left:1820px;height:30px"></div><div class="reply" style="left:1828px;top:4px">Reply</div></div><div class="row" style="top:990px;height:30px;background:#e9e9e9;box-shadow:0 -1px 0 rgba(233,233,233,0.8)"><div class="exp" style="height:30px"><svg width="8" height="11" viewBox="0 0 8 11"><path d="M1.4 1.2 L5.9 5.5 L1.4 9.8" fill="none" stroke="#000" stroke-width="2.3"/></svg></div><div class="c" style="left:28px">115</div><div class="c" style="left:168px"></div><div class="c" style="left:342px">Underwater World</div><div class="c" style="left:559px">100140</div><div class="c" style="left:699px">PRODUCTION</div><div class="c" style="left:920px">Question about an order</div><div class="c" style="left:1216px">Monday, January 8, 2024 10:50 AM</div><div class="c" style="left:1441px">Advertising Campaign XX-1816-5805</div><div class="vl" style="left:160px;height:30px"></div><div class="vl" style="left:334px;height:30px"></div><div class="vl" style="left:551px;height:30px"></div><div class="vl" style="left:691px;height:30px"></div><div class="vl" style="left:912px;height:30px"></div><div class="vl" style="left:1208px;height:30px"></div><div class="vl" style="left:1433px;height:30px"></div><div class="vl" style="left:1820px;height:30px"></div><div class="reply" style="left:1828px;top:4px">Reply</div></div>
</div>
</body></html>
